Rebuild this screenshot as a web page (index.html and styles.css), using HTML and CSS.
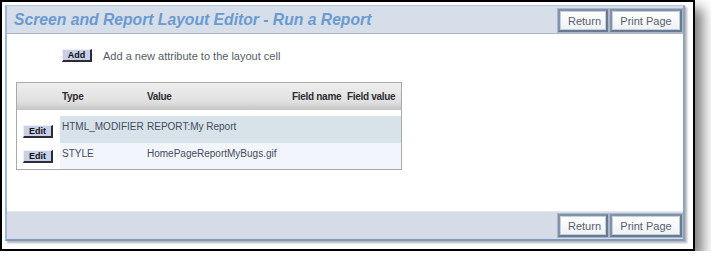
FILE: index.html
```html
<!DOCTYPE html>
<html lang="en">
  <head>
    <meta charset="UTF-8" />
    <title>Screen and Report Layout Editor</title>
    <link rel="stylesheet" href="styles.css">
  </head>
  <body>
    <div class="frame">
      <div class="panel">
        <div class="bar top">
          <h1 class="title">Screen and Report Layout Editor - Run a Report</h1>
          <div class="actions">
            <button class="btn">Return</button>
            <button class="btn">Print Page</button>
          </div>
        </div>

        <div class="content">
          <div class="add-row">
            <button class="mini">Add</button>
            <span class="hint">Add a new attribute to the layout cell</span>
          </div>

          <table class="attrs">
            <thead>
              <tr>
                <th class="c-edit"></th>
                <th class="c-type">Type</th>
                <th class="c-value">Value</th>
                <th class="c-fname">Field name</th>
                <th class="c-fvalue">Field value</th>
              </tr>
            </thead>
            <tbody>
              <tr class="spacer"><td colspan="5"></td></tr>
              <tr class="odd">
                <td class="c-edit"><button class="mini">Edit</button></td>
                <td>HTML_MODIFIER</td>
                <td>REPORT:My Report</td>
                <td></td>
                <td></td>
              </tr>
              <tr class="even">
                <td class="c-edit"><button class="mini">Edit</button></td>
                <td>STYLE</td>
                <td>HomePageReportMyBugs.gif</td>
                <td></td>
                <td></td>
              </tr>
            </tbody>
          </table>
        </div>

        <div class="bar bottom">
          <div class="actions">
            <button class="btn">Return</button>
            <button class="btn">Print Page</button>
          </div>
        </div>
      </div>
    </div>
  </body>
</html>
```

FILE: styles.css
```css
* {
  box-sizing: border-box;
}

body {
  margin: 0;
  background: #fff;
  font-family: "Liberation Sans", Arial, sans-serif;
}

.frame {
  width: 695px;
  height: 251px;
  border: 2px solid #000;
  padding: 3px 8px 8px 3px;
  background: #fff;
  box-shadow: 8px 8px 12px rgba(0, 0, 0, 0.5);
}

.panel {
  height: 100%;
  display: flex;
  flex-direction: column;
  background: #fff;
  border-top: 1px solid #b9c6d7;
  border-left: 2px solid #9fb6d6;
  border-right: 2px solid #8ea3be;
  border-bottom: 2px solid #7f9abf;
  box-shadow: 2px 2px 2px rgba(0, 0, 0, 0.3);
}

.bar {
  display: flex;
  align-items: flex-start;
  background: #d6dee9;
}

.top {
  height: 28px;
  padding: 3px 1px 0 7px;
  border-bottom: 1px solid #aeb7c3;
}

.bottom {
  height: 28px;
  padding: 2px 1px 0 0;
  border-top: 1px solid #e3e8ef;
  justify-content: flex-end;
  background: #d5dce7;
}

.title {
  flex: 1;
  margin: 2px 0 0;
  font-size: 15.7px;
  font-weight: bold;
  font-style: italic;
  color: #6b9ad0;
  white-space: nowrap;
}

.actions {
  display: flex;
  gap: 2px;
}

.btn {
  height: 23px;
  padding: 0 8px;
  font-family: "Liberation Sans", Arial, sans-serif;
  font-size: 11px;
  color: #59606e;
  background: linear-gradient(#ffffff, #eef1f5);
  border: 2px solid;
  border-color: #8192a9 #687990 #687990 #8192a9;
  box-shadow: inset 0 0 0 1px #c4cfdc, 0 0 0 1px #a9b7c8;
  cursor: pointer;
}

.btn:first-child {
  width: 50px;
}

.btn:last-child {
  width: 72px;
}

.content {
  flex: 1;
  padding: 15px 0 0 9px;
}

.add-row {
  display: flex;
  align-items: center;
  gap: 11px;
  margin-left: 46px;
}

.hint {
  font-size: 11px;
  color: #555b66;
}

.mini {
  width: 30px;
  height: 13px;
  padding: 0;
  font-family: "Liberation Sans", Arial, sans-serif;
  font-size: 9px;
  font-weight: bold;
  line-height: 11px;
  color: #111;
  background: #c8cfe8;
  border: 1px solid;
  border-color: #eef0f8 #2c2c34 #2c2c34 #eef0f8;
  border-right-width: 2px;
  border-bottom-width: 2px;
  cursor: pointer;
}

.attrs {
  margin-top: 20px;
  width: 386px;
  border: 1px solid #a9a9a9;
  border-spacing: 0;
  table-layout: fixed;
  font-size: 10px;
}

.attrs th {
  height: 27px;
  padding: 0 2px;
  text-align: left;
  font-weight: bold;
  color: #2e2e34;
  background: linear-gradient(#eeeeee, #e0e0e0 70%, #c4c4c4);
  white-space: nowrap;
  letter-spacing: -0.3px;
}

.attrs .c-edit {
  width: 43px;
}

.attrs .c-type {
  width: 85px;
}

.attrs .c-value {
  width: 145px;
}

.attrs .c-fname {
  width: 55px;
}

.attrs td {
  padding: 5px 2px 0;
  vertical-align: top;
  color: #434b60;
  white-space: nowrap;
}

.attrs .spacer td {
  height: 6px;
  padding: 0;
}

.attrs .odd td {
  height: 27px;
  background: #d7e3e9;
}

.attrs .even td {
  height: 26px;
  background: #f3f5fc;
}

.attrs td.c-edit {
  padding: 0 0 0 6px;
  vertical-align: middle;
  background: #fff;
}

.attrs .odd td.c-edit {
  padding-top: 3px;
  background: #fff;
}

.attrs .even td.c-edit {
  padding-top: 1px;
  background: #fff;
}
```
